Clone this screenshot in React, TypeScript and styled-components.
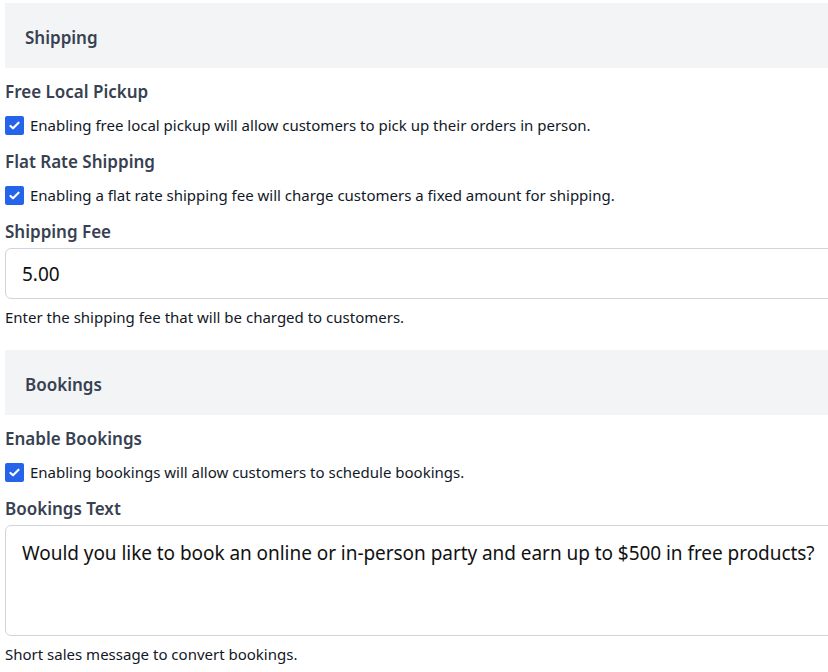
import React from "react";
import styled, { createGlobalStyle } from "styled-components";

const Global = createGlobalStyle`
  html, body { margin: 0; padding: 0; background: #fff; overflow: hidden; }
  body { font-family: "Noto Sans", "Open Sans", sans-serif; }
  * { box-sizing: border-box; }
`;

const Page = styled.div`
  width: 880px;
  padding: 3px 0 0 5px;
  display: flex;
  flex-direction: column;
`;

const SectionHeader = styled.div`
  height: 65px;
  background: #f3f4f6;
  display: flex;
  align-items: center;
  padding: 3px 0 0 20px;
  font-size: 17px;
  font-weight: 600;
  color: #374151;
  margin-bottom: 11px;
`;

const Field = styled.div`
  display: flex;
  flex-direction: column;
`;

const Label = styled.div<{ $mb: number }>`
  font-size: 17px;
  line-height: 24px;
  font-weight: 600;
  color: #374151;
  margin-top: 1px;
  margin-bottom: ${(p) => p.$mb}px;
`;

const CheckRow = styled.label`
  display: flex;
  align-items: center;
  gap: 6px;
  height: 24px;
  font-size: 15px;
  color: #111827;
  margin-bottom: 12px;
`;

const Box = styled.span`
  width: 19px;
  height: 19px;
  border-radius: 2px;
  background: #2563eb;
  display: inline-flex;
  align-items: center;
  justify-content: center;
  flex-shrink: 0;
`;

const Input = styled.div`
  height: 51px;
  border: 1px solid #d1d5db;
  border-radius: 6px;
  display: flex;
  align-items: center;
  padding-left: 16px;
  font-size: 19px;
  color: #111;
`;

const TextArea = styled.div`
  height: 111px;
  border: 1px solid #d1d5db;
  border-radius: 6px;
  padding: 13px 0 0 16px;
  font-size: 19px;
  letter-spacing: -0.05px;
  line-height: 28px;
  color: #111;
  white-space: nowrap;
`;

const Help = styled.div<{ $mb: number }>`
  font-size: 15px;
  line-height: 20px;
  color: #111827;
  margin-top: 8px;
  margin-bottom: ${(p) => p.$mb}px;
`;

const Check = () => (
  <Box>
    <svg width="13" height="13" viewBox="0 0 16 16" fill="none">
      <path d="M3 8.5l3.2 3L13 4.5" stroke="#fff" strokeWidth="2.6" strokeLinecap="round" strokeLinejoin="round" />
    </svg>
  </Box>
);

const CheckField = ({ label, text }: { label: string; text: string }) => (
  <Field>
    <Label $mb={9}>{label}</Label>
    <CheckRow>
      <Check />
      <span>{text}</span>
    </CheckRow>
  </Field>
);

export default function App() {
  return (
    <>
      <Global />
      <Page>
        <SectionHeader>Shipping</SectionHeader>
        <CheckField
          label="Free Local Pickup"
          text="Enabling free local pickup will allow customers to pick up their orders in person."
        />
        <CheckField
          label="Flat Rate Shipping"
          text="Enabling a flat rate shipping fee will charge customers a fixed amount for shipping."
        />
        <Field>
          <Label $mb={4}>Shipping Fee</Label>
          <Input>5.00</Input>
          <Help $mb={23}>Enter the shipping fee that will be charged to customers.</Help>
        </Field>
        <SectionHeader>Bookings</SectionHeader>
        <CheckField
          label="Enable Bookings"
          text="Enabling bookings will allow customers to schedule bookings."
        />
        <Field>
          <Label $mb={4}>Bookings Text</Label>
          <TextArea>
            Would you like to book an online or in-person party and earn up to $500 in free products?
          </TextArea>
          <Help $mb={0}>Short sales message to convert bookings.</Help>
        </Field>
      </Page>
    </>
  );
}
